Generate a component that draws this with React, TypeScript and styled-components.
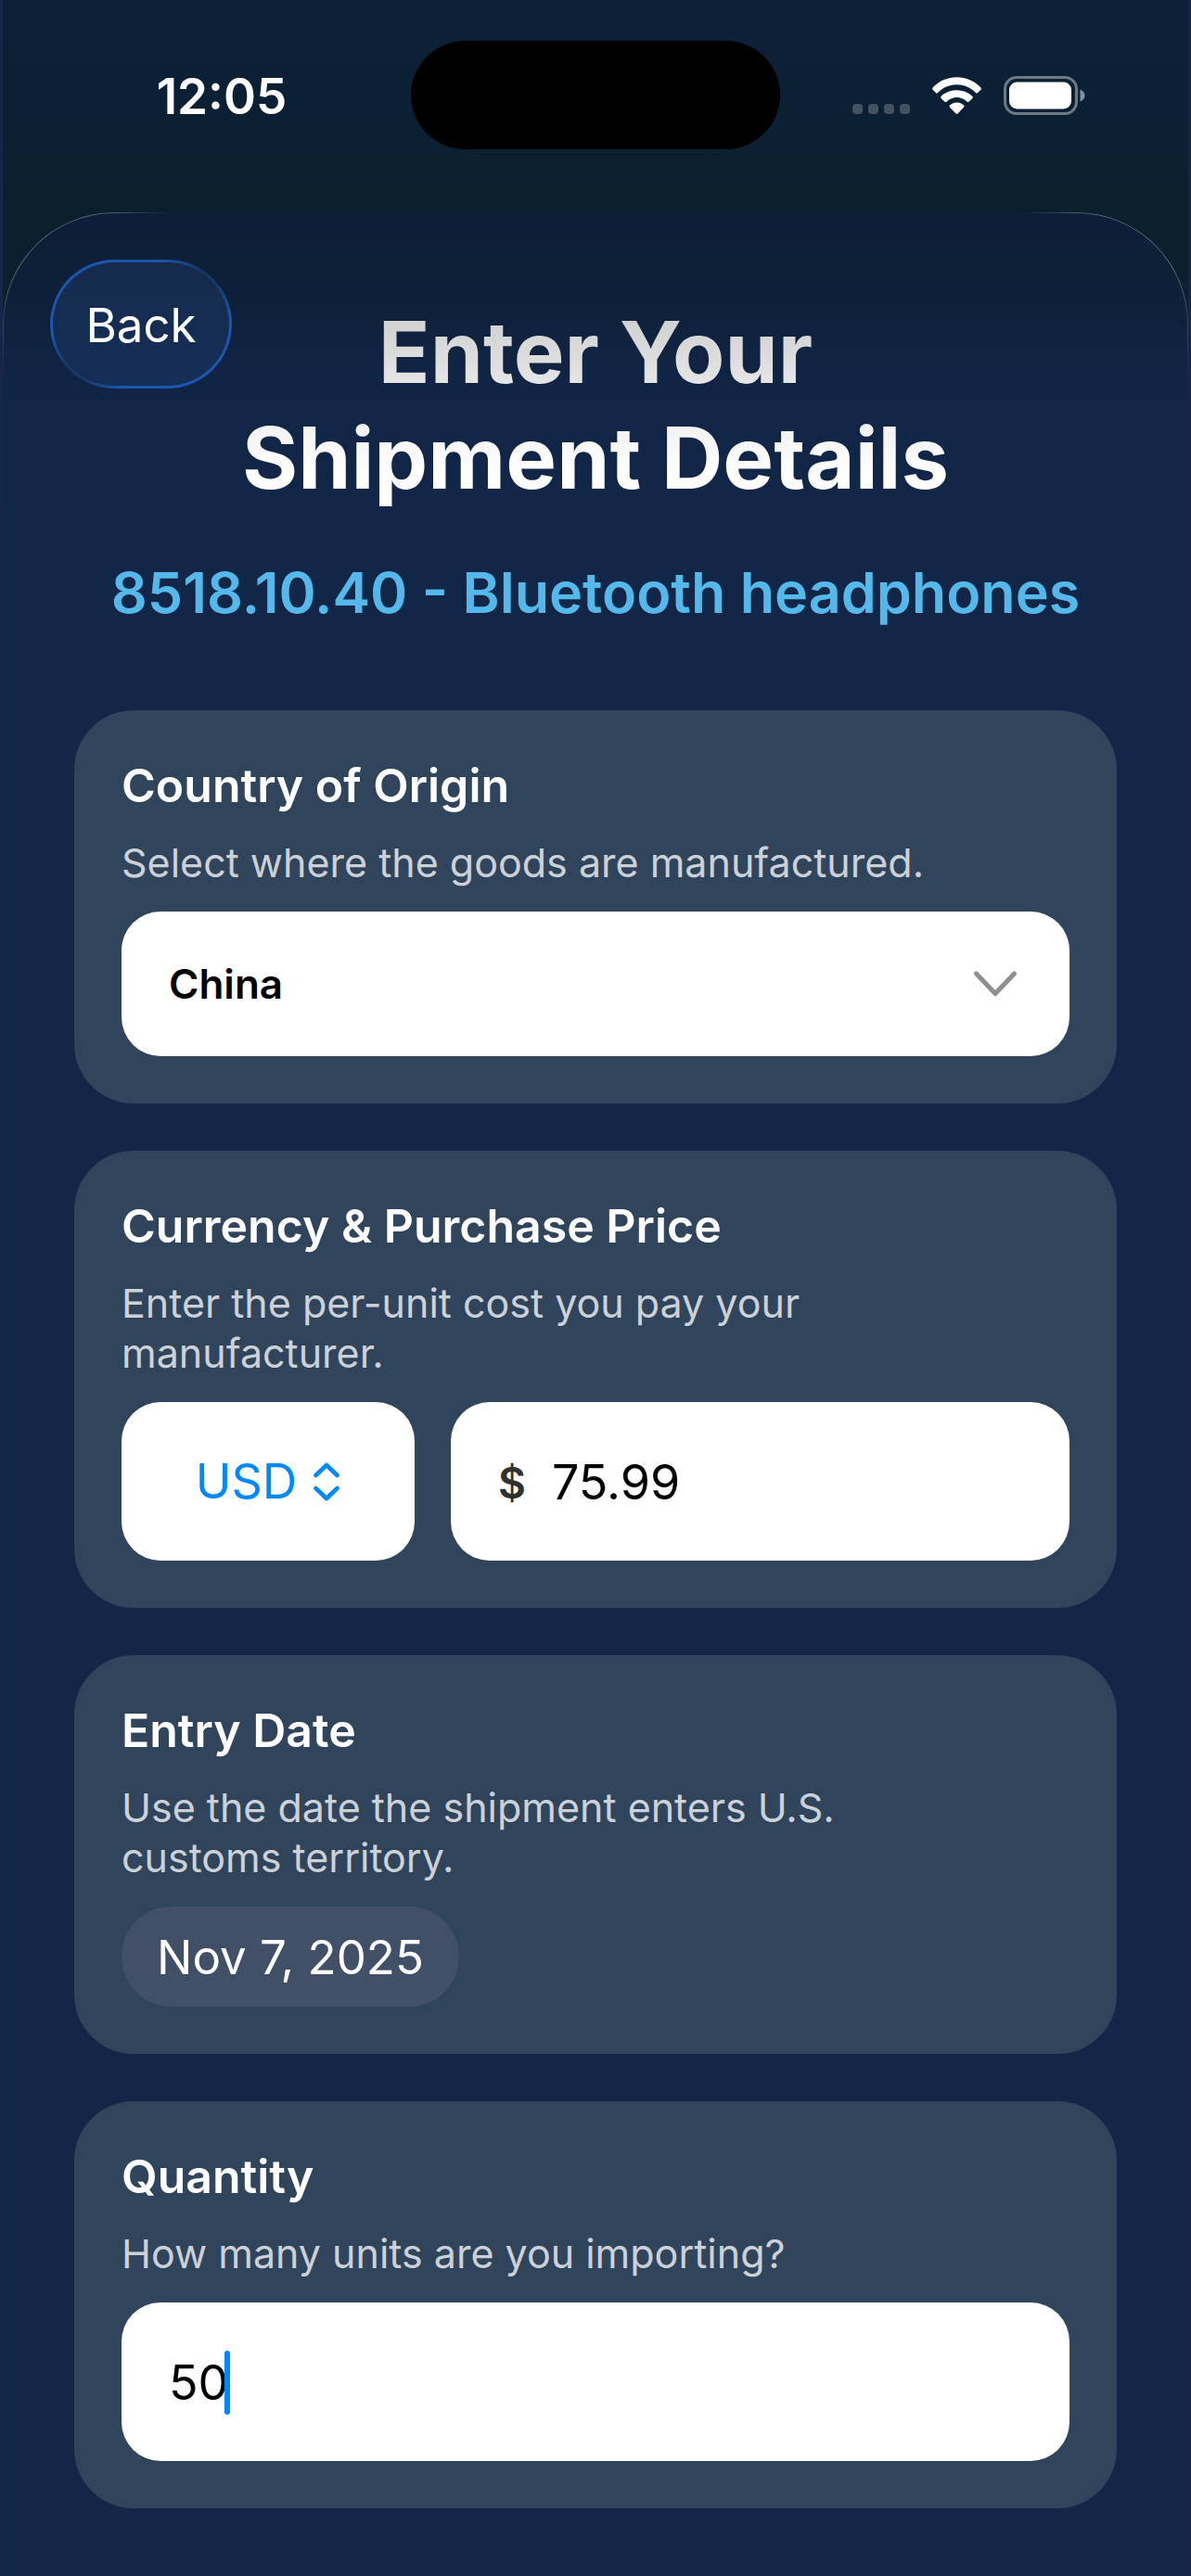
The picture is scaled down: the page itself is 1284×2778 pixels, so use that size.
import React, { useState } from "react";
import styled, { createGlobalStyle, css } from "styled-components";

const GlobalStyle = createGlobalStyle`
  *, *::before, *::after { box-sizing: border-box; }
  body {
    margin: 0;
    background: #122748;
    color: #fff;
    font-family: Inter, "Liberation Sans", sans-serif;
    -webkit-font-smoothing: antialiased;
  }
  button, input, select { font: inherit; color: inherit; margin: 0; }
`;

const Screen = styled.div`
  min-height: 100vh;
  display: flex;
  flex-direction: column;
  border: solid #172549;
  border-width: 0 3px;
  background: linear-gradient(#0e2038 0, #0b2033 140px, #0c1f2c 220px, #0c1f2e 420px);
`;

const StatusBar = styled.div`
  display: grid;
  grid-template-columns: 1fr 398px 1fr;
  padding: 44px 0 68px;
`;

const StatusCell = styled.div`
  display: flex;
  align-items: center;
  justify-content: center;
`;

const Clock = styled(StatusCell)`
  padding: 2px 0 0 32px;
  font-size: 53px;
  font-weight: 600;
`;

const Indicators = styled(StatusCell)`
  padding-right: 34px;
  gap: 24px;
`;

const Island = styled.div`
  height: 117px;
  border-radius: 59px;
  background: #000;
`;

const Sheet = styled.main`
  position: relative;
  flex: 1;
  padding: 51px 77px 72px;
  border-radius: 120px 120px 0 0;
  background: linear-gradient(#0e1e38 0, #0e2039 90px, #112546 200px, #122748 320px);

  /* hairline highlight that fades out away from the two rounded corners */
  &::before {
    content: "";
    position: absolute;
    inset: 0 0 auto;
    height: 180px;
    border: 1px solid rgba(170, 190, 200, 0.5);
    border-bottom: 0;
    border-radius: 120px 120px 0 0;
    pointer-events: none;
    mask-image: linear-gradient(90deg, #000 100px, transparent 180px, transparent calc(100% - 180px), #000 calc(100% - 100px)),
      linear-gradient(#000 60px, transparent);
    mask-composite: intersect;
  }
`;

const Header = styled.header`
  display: grid;
  margin: 0 -26px;

  > * { grid-area: 1 / 1; }
`;

const BackButton = styled.button`
  align-self: start;
  justify-self: start;
  width: 196px;
  height: 139px;
  padding: 2px 0 0;
  border: 3px solid transparent;
  border-radius: 70px;
  background:
    linear-gradient(#162b4c, #152e58) padding-box,
    linear-gradient(145deg, #1c56ae 30%, #183866 45%, #183866 55%, #1c56ae 70%) border-box;
  font-size: 51px;
  cursor: pointer;
`;

const Title = styled.h1`
  margin: 43px 0 0;
  justify-self: center;
  text-align: center;
  font-size: 92px;
  line-height: 114px;
  font-weight: 700;
  color: transparent;
  background: linear-gradient(#cacaca 0, #e5e5e5 90px, #f3f3f3 140px, #fff 190px);
  background-clip: text;
`;

const Product = styled.p`
  margin: 51px 0 90px;
  text-align: center;
  font-size: 61px;
  line-height: 74px;
  font-weight: 600;
  color: #55b8ea;
`;

const Form = styled.form`
  display: grid;
  grid-template-columns: minmax(0, 1fr);
  gap: 51px;
`;

const Card = styled.section`
  display: grid;
  grid-template-columns: minmax(0, 1fr);
  gap: 26px;
  padding: 51px;
  border-radius: 64px;
  background: #30445c;
`;

const CardLabel = styled.label`
  font-size: 50px;
  line-height: 60px;
  font-weight: 600;
`;

const Hint = styled.p`
  margin: 0;
  max-width: 900px;
  font-size: 43px;
  line-height: 54px;
  color: #ccd1d8;
`;

const Row = styled.div`
  display: flex;
  gap: 39px;
`;

const fieldBox = css`
  border-radius: 42px;
  background: #fff;
  color: #000;
`;

const bareControl = css`
  appearance: none;
  border: 0;
  padding: 0;
  outline: 0;
  background: none;
`;

const CountryBox = styled.div`
  ${fieldBox}
  display: grid;
  grid-template-columns: 1fr auto;
  align-items: center;
  padding-right: 56px;

  > * { grid-row: 1; }
  svg { grid-column: 2; pointer-events: none; }
`;

const CountrySelect = styled.select`
  ${bareControl}
  grid-column: 1 / 3;
  height: 156px;
  padding-left: 51px;
  font-size: 44px;
  font-weight: 600;
`;

const CurrencyBox = styled.div`
  ${fieldBox}
  width: 316px;
  height: 171px;
  display: flex;
  align-items: center;
  justify-content: center;
  gap: 17px;
  color: #0088ff;
`;

const CurrencySelect = styled.select`
  ${bareControl}
  field-sizing: content;
  font-size: 52px;
`;

const InputBox = styled.div`
  ${fieldBox}
  flex: 1;
  min-width: 0;
  height: 171px;
  display: flex;
  align-items: center;
  padding: 2px 51px 0;
`;

const CurrencySign = styled.span`
  margin-right: 28px;
  font-size: 46px;
  font-weight: 600;
  color: #303030;
`;

const TextInput = styled.input<{ $hug?: boolean }>`
  ${bareControl}
  font-size: 52px;
  line-height: 68px;
  ${(p) => (p.$hug ? "field-sizing: content; caret-color: transparent;" : "flex: 1; min-width: 0;")}
`;

const Caret = styled.span`
  width: 6px;
  height: 69px;
  margin-left: -4px;
  border-radius: 3px;
  background: #0088ff;
`;

const DateButton = styled.button`
  justify-self: start;
  height: 108px;
  padding: 0 38px;
  border: 0;
  border-radius: 54px;
  background: #415066;
  font-size: 51px;
  cursor: pointer;
`;

const SignalDots = () => (
  <svg width="62" height="42" viewBox="0 0 62 42" fill="#435161" aria-hidden="true">
    {[0, 17, 34, 51].map((x) => (
      <rect key={x} x={x} y="30" width="11" height="11" rx="4" />
    ))}
  </svg>
);

const WifiIcon = () => (
  <svg width="53" height="40" viewBox="0 0 53 40" fill="#fff" aria-hidden="true">
    <path d="M1 11C15-3.5 38-3.5 52 11Q53.5 12.5 52.3 13.9L49 17Q48 18 47 17C36 5.3 17 5.3 6 17Q5 18 4 17L.7 13.9Q-.5 12.5 1 11Z" />
    <path d="M10 20.5C19 12 34 12 43 20.5Q44.5 21.8 43.2 23.2L39.5 26.7Q38.5 27.5 37.5 26.7C31 20.5 22 20.5 15.5 26.7Q14.5 27.5 13.5 26.7L9.8 23.2Q8.5 21.8 10 20.5Z" />
    <path d="M19 30.5C23 26.6 30 26.6 34 30.5Q35 31.6 34 32.8L27.5 39.4Q26.5 40.3 25.5 39.4L19 32.8Q18 31.6 19 30.5Z" />
  </svg>
);

const BatteryIcon = () => (
  <svg width="88" height="42" viewBox="0 0 88 42" aria-hidden="true">
    <rect x="1.5" y="1.5" width="77" height="39" rx="12.5" fill="none" stroke="#6d7985" strokeWidth="3" />
    <rect x="6" y="6.5" width="67" height="29" rx="8.5" fill="#fff" />
    <path d="M82.5 14.5Q87.5 16.5 87.5 21T82.5 27.5Z" fill="#84909a" />
  </svg>
);

const ChevronDown = () => (
  <svg width="48" height="30" viewBox="0 0 48 30" fill="none" stroke="#8e8e93" strokeWidth="5" strokeLinecap="round" strokeLinejoin="round" aria-hidden="true">
    <path d="M3.5 4L24 25.5L44.5 4" />
  </svg>
);

const ChevronUpDown = () => (
  <svg width="30" height="42" viewBox="0 0 30 42" fill="none" stroke="#0088ff" strokeWidth="4.6" strokeLinecap="round" strokeLinejoin="round" aria-hidden="true">
    <path d="M3.5 14L15 3L26.5 14M3.5 28L15 39L26.5 28" />
  </svg>
);

export default function App() {
  const [country, setCountry] = useState("China");
  const [currency, setCurrency] = useState("USD");
  const [price, setPrice] = useState("75.99");
  const [quantity, setQuantity] = useState("50");

  return (
    <>
      <GlobalStyle />
      <Screen>
        <StatusBar>
          <Clock>12:05</Clock>
          <Island />
          <Indicators>
            <SignalDots />
            <WifiIcon />
            <BatteryIcon />
          </Indicators>
        </StatusBar>

        <Sheet>
          <Header>
            <Title>
              Enter Your
              <br />
              Shipment Details
            </Title>
            <BackButton type="button">Back</BackButton>
          </Header>
          <Product>8518.10.40 - Bluetooth headphones</Product>

          <Form>
            <Card>
              <CardLabel htmlFor="country">Country of Origin</CardLabel>
              <Hint>Select where the goods are manufactured.</Hint>
              <CountryBox>
                <CountrySelect id="country" value={country} onChange={(e) => setCountry(e.target.value)}>
                  <option>China</option>
                </CountrySelect>
                <ChevronDown />
              </CountryBox>
            </Card>

            <Card>
              <CardLabel htmlFor="price">Currency &amp; Purchase Price</CardLabel>
              <Hint>Enter the per-unit cost you pay your manufacturer.</Hint>
              <Row>
                <CurrencyBox>
                  <CurrencySelect aria-label="Currency" value={currency} onChange={(e) => setCurrency(e.target.value)}>
                    <option>USD</option>
                  </CurrencySelect>
                  <ChevronUpDown />
                </CurrencyBox>
                <InputBox>
                  <CurrencySign>$</CurrencySign>
                  <TextInput id="price" inputMode="decimal" value={price} onChange={(e) => setPrice(e.target.value)} />
                </InputBox>
              </Row>
            </Card>

            <Card>
              <CardLabel htmlFor="entry-date">Entry Date</CardLabel>
              <Hint>Use the date the shipment enters U.S. customs territory.</Hint>
              <DateButton id="entry-date" type="button">Nov 7, 2025</DateButton>
            </Card>

            <Card>
              <CardLabel htmlFor="quantity">Quantity</CardLabel>
              <Hint>How many units are you importing?</Hint>
              <InputBox>
                <TextInput $hug id="quantity" inputMode="numeric" value={quantity} onChange={(e) => setQuantity(e.target.value)} />
                <Caret />
              </InputBox>
            </Card>
          </Form>
        </Sheet>
      </Screen>
    </>
  );
}
